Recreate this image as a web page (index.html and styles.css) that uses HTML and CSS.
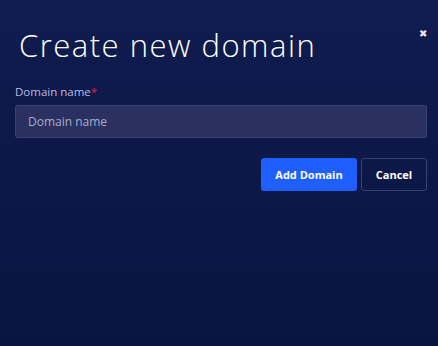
FILE: index.html
```html
<!DOCTYPE html>
<html>

<head>
    <title>Create new domain</title>
    <link rel="stylesheet" href="styles.css">
</head>

<body>
    <div class="modal">
        <div class="modal-header">
            <h1 class="modal-title">Create new domain</h1>
            <button class="close-btn" type="button">&#10006;</button>
        </div>
        <form class="form">
            <label class="label" for="domain">Domain name<span class="required">*</span></label>
            <input class="input" type="text" id="domain" placeholder="Domain name" autofocus>
            <div class="actions">
                <button class="btn btn-primary" type="button">Add Domain</button>
                <button class="btn btn-outline" type="button">Cancel</button>
            </div>
        </form>
    </div>
    <script>
        document.getElementById("domain").focus();
    </script>
</body>

</html>
```

FILE: styles.css
```css
* {
    margin: 0;
    box-sizing: border-box;
}

body {
    width: 438px;
    height: 346px;
    background: linear-gradient(to bottom, #111c4f, #081441);
    font-family: "Open Sans", sans-serif;
    color: #ffffff;
}

.modal {
    padding: 0 11px 0 15px;
}

.modal-header {
    display: flex;
    justify-content: space-between;
    align-items: flex-start;
    padding-top: 24px;
}

.modal-title {
    font-size: 31px;
    font-weight: 300;
    padding-left: 4px;
    letter-spacing: 1.5px;
}

.close-btn {
    background: none;
    border: none;
    color: #e6e8f5;
    font-size: 10px;
    padding: 0;
    margin-top: 4px;
    cursor: pointer;
}

.form {
    display: flex;
    flex-direction: column;
    padding-top: 18px;
}

.label {
    font-size: 11.5px;
    color: #b8bce0;
    margin-bottom: 6px;
}

.required {
    color: #e0213a;
}

.input {
    height: 33px;
    width: 412px;
    background-color: #2a3060;
    border: 1px solid #3b4274;
    border-radius: 3px;
    padding: 0 12px;
    font-family: "Open Sans", sans-serif;
    font-size: 12px;
    color: #ffffff;
    caret-color: #ffffff;
    outline: none;
}

.input::placeholder {
    color: #a7abcb;
}

.actions {
    display: flex;
    justify-content: flex-end;
    gap: 4px;
    margin-top: 20px;
    width: 412px;
}

.btn {
    height: 33px;
    border-radius: 3px;
    font-family: "Open Sans", sans-serif;
    font-weight: 700;
    font-size: 11px;
    color: #ffffff;
    cursor: pointer;
}

.btn-primary {
    width: 96px;
    background-color: #1f5fff;
    border: none;
}

.btn-outline {
    width: 66px;
    background: transparent;
    border: 1px solid #3a4070;
}
```
